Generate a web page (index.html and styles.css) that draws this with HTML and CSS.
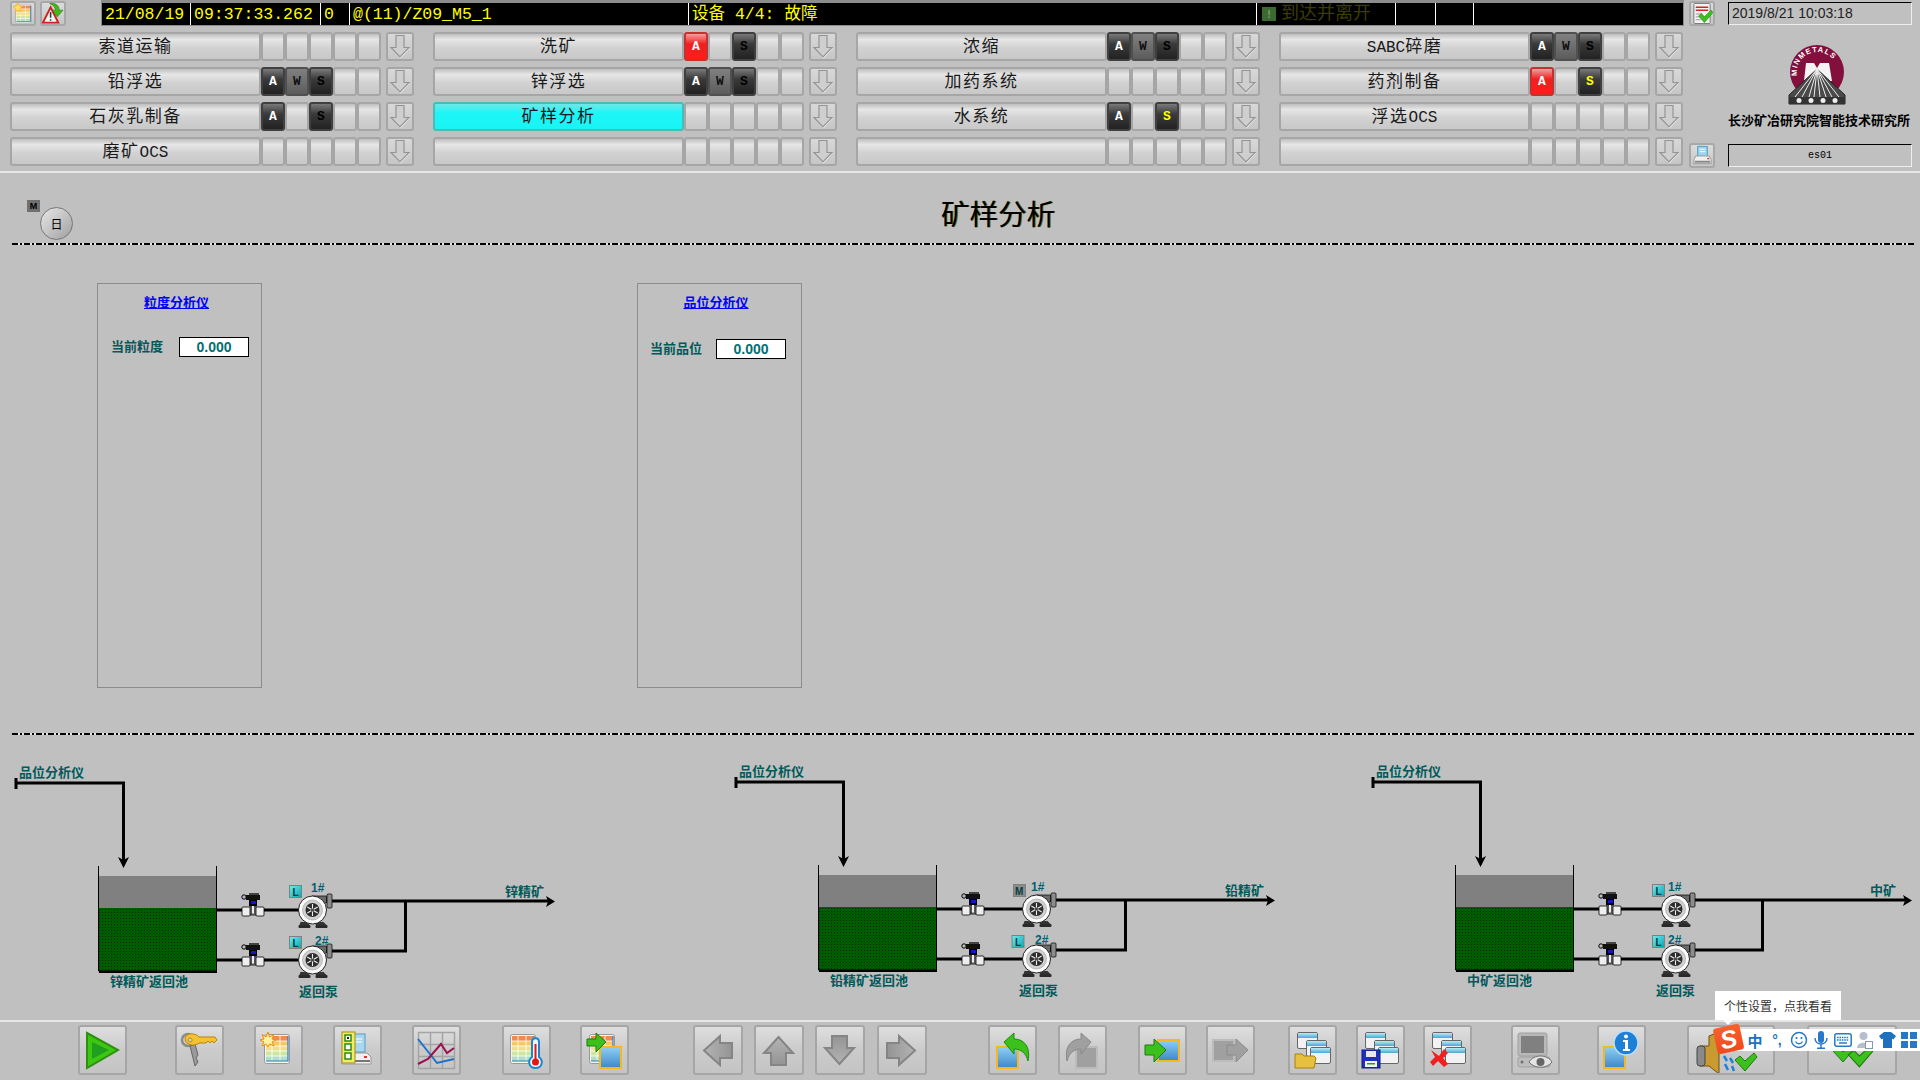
FILE: index.html
```html
<!DOCTYPE html>
<html lang="zh-CN">
<head>
    <meta charset="UTF-8">
    <title>矿样分析</title>
    <link rel="stylesheet" href="styles.css">
</head>
<body>
    <svg class="defs" width="0" height="0">
        <defs>
            <linearGradient id="grayArrow" x1="0" y1="0" x2="0" y2="1"><stop offset="0" stop-color="#b4b4b4"/><stop offset="1" stop-color="#949494"/></linearGradient>
            <linearGradient id="blueBox" x1="0" y1="0" x2="0" y2="1"><stop offset="0" stop-color="#8fd0f5"/><stop offset="1" stop-color="#3d86c8"/></linearGradient>
            <linearGradient id="cyanBadge" x1="0" y1="0" x2="1" y2="1"><stop offset="0" stop-color="#70f0f0"/><stop offset="1" stop-color="#0aa0b0"/></linearGradient>
            <linearGradient id="titleBar" x1="0" y1="0" x2="0" y2="1"><stop offset="0" stop-color="#b8ecf8"/><stop offset="1" stop-color="#4aa8d0"/></linearGradient>
            <pattern id="slurry" width="3" height="3" patternUnits="userSpaceOnUse"><rect width="3" height="3" fill="#005c00"/><rect width="1" height="1" fill="#002a00"/></pattern>

            <symbol id="sheet" viewBox="0 0 26 30">
                <rect x="0.5" y="0.5" width="25" height="29" rx="2" fill="#f4f4f4" stroke="#999"/>
                <rect x="2" y="2" width="22" height="5" fill="#f08a50"/>
                <rect x="2" y="7" width="22" height="5" fill="#f6c860"/>
                <rect x="2" y="12" width="22" height="5" fill="#eee08a"/>
                <rect x="2" y="17" width="22" height="5" fill="#cfe6a0"/>
                <rect x="2" y="22" width="22" height="5" fill="#b0e0c0"/>
                <path d="M8 2V27M16 2V27M2 7H24M2 12H24M2 17H24M2 22H24" stroke="#fff" stroke-width="0.8"/>
                <path d="M24 2V27H2" fill="none" stroke="#2a78c8" stroke-width="1.2"/>
            </symbol>
            <symbol id="win" viewBox="0 0 21 17">
                <rect x="0.5" y="0.5" width="20" height="16" rx="1.5" fill="#f2f2f2" stroke="#666"/>
                <rect x="1" y="1" width="19" height="5" fill="url(#titleBar)"/>
            </symbol>
            <symbol id="frame" viewBox="0 0 23 23">
                <rect x="1" y="1" width="21" height="21" fill="url(#blueBox)" stroke="#f4b820" stroke-width="2"/>
            </symbol>
            <symbol id="frameOff" viewBox="0 0 23 23">
                <rect x="1" y="1" width="21" height="21" fill="#a0a0a0" stroke="#bcbcbc" stroke-width="2"/>
            </symbol>
            <symbol id="arrowUp" viewBox="0 0 49 49">
                <path d="M24.5 11 39 27H32V39H17V27H10Z" fill="url(#grayArrow)" stroke="#858585" stroke-width="2"/>
            </symbol>
            <symbol id="tick" viewBox="0 0 24 20">
                <path d="M1 8 6 4 11 9 20 1 23 5 11 19Z" fill="#3cc01c" stroke="#1f7a10"/>
            </symbol>
            <symbol id="downHint" viewBox="0 0 24 25">
                <path d="M9 2.500H16V14H22L12.500 24.500 3 14H9Z" fill="#f0f0f0"/>
                <path d="M8 1.500H16V13.500H21L12 23 3 13.500H8Z" fill="#cfcfcf" stroke="#949494" stroke-width="1.200"/>
            </symbol>
            <symbol id="pump" viewBox="-16 -17 37 46">
                <path d="M0 -14H14V-7H8Z" fill="#6a6a6a" stroke="#111" stroke-width="0.8"/>
                <rect x="14.5" y="-16" width="5" height="14" rx="1" fill="#8c8c8c" stroke="#111" stroke-width="0.8"/>
                <path d="M-12 12 -13 15H-3L-5 12ZM4 12 3 15H14L11 12Z" fill="#333"/>
                <rect x="-14" y="15" width="12" height="3" rx="1" fill="#2a2a2a"/>
                <rect x="3" y="15" width="12" height="3" rx="1" fill="#2a2a2a"/>
                <circle r="14" fill="#fbfbfb" stroke="#222"/>
                <circle r="10" fill="#d0d0d0" stroke="#999" stroke-width="0.6"/>
                <circle r="7" fill="#2c2c2c"/>
                <path d="M0 -6V6M-5.2 -3 5.2 3M-5.2 3 5.2 -3" stroke="#eee" stroke-width="1.1"/>
                <circle r="1.6" fill="#444"/>
            </symbol>
            <symbol id="valve" viewBox="-12 -19 24 29">
                <path d="M-3 -4H3V5H-3Z" fill="#bbb" stroke="#000" stroke-width="0.8"/>
                <rect x="-11" y="-3" width="8" height="9" rx="1" fill="#eee" stroke="#000" stroke-width="0.8"/>
                <rect x="3" y="-3" width="8" height="9" rx="1" fill="#eee" stroke="#000" stroke-width="0.8"/>
                <rect x="-1.5" y="-5" width="3" height="9" fill="#eee" stroke="#000" stroke-width="0.6"/>
                <rect x="-4" y="-10" width="8" height="6" fill="#000"/>
                <rect x="-2" y="-9" width="5" height="3" fill="#1414d0"/>
                <rect x="-7" y="-15" width="14" height="5" fill="#111"/>
                <rect x="-4" y="-17" width="10" height="2" fill="#444"/>
                <circle cx="-9" cy="-13" r="2.2" fill="#bbb" stroke="#000"/>
            </symbol>
        </defs>
    </svg>

    <header class="header">
        <div class="nav-area">
            <div class="status-row">
                <button class="mini-btn">
                    <svg width="23" height="23" viewBox="0 0 23 23"><use href="#sheet" x="3" y="2" width="18" height="20"/><path d="M6 0 7.500 3.500 11 4 8.500 6.500 9 10 6 8 3 10 3.500 6.500 1 4 4.500 3.500Z" fill="#ffe15a" stroke="#f09a20" stroke-width="0.6"/></svg>
                </button>
                <button class="mini-btn">
                    <svg width="23" height="23" viewBox="0 0 23 23"><path d="M9 5 17 21H1Z" fill="#f4f4f4" stroke="#d02020" stroke-width="2"/><path d="M9 10V16M9 17.500V19" stroke="#333" stroke-width="1.6"/><path d="M8 1C14 0 18 3 18 8H22L16 15 11 8H14C14 5 12 3 8 1Z" fill="#44b818" stroke="#2a7a10" stroke-width="0.6"/></svg>
                </button>
                <div class="alarm-bar">
                    <span class="alarm-cell date">21/08/19</span>
                    <span class="alarm-cell time">09:37:33.262</span>
                    <span class="alarm-cell code">0</span>
                    <span class="alarm-cell tag">@(11)/Z09_M5_1</span>
                    <span class="alarm-cell desc">设备 4/4: 故障</span>
                    <span class="alarm-cell state"><i class="state-flag">!</i>到达并离开</span>
                    <span class="alarm-cell blank-a"></span>
                    <span class="alarm-cell blank-b"></span>
                    <span class="alarm-cell blank-c"></span>
                </div>
            </div>
            <nav class="nav-grid">
                <div class="nav-item"><button class="nav-btn">索道运输</button><span class="cell"></span><span class="cell"></span><span class="cell"></span><span class="cell"></span><span class="cell"></span><button class="hint"><svg width="24" height="25"><use href="#downHint" width="24" height="25"/></svg></button></div>
                <div class="nav-item"><button class="nav-btn">洗矿</button><span class="cell red">A</span><span class="cell"></span><span class="cell dark">S</span><span class="cell"></span><span class="cell"></span><button class="hint"><svg width="24" height="25"><use href="#downHint" width="24" height="25"/></svg></button></div>
                <div class="nav-item"><button class="nav-btn">浓缩</button><span class="cell dark lit">A</span><span class="cell mid">W</span><span class="cell dark">S</span><span class="cell"></span><span class="cell"></span><button class="hint"><svg width="24" height="25"><use href="#downHint" width="24" height="25"/></svg></button></div>
                <div class="nav-item"><button class="nav-btn"><span class="latin">SABC</span>碎磨</button><span class="cell dark lit">A</span><span class="cell mid">W</span><span class="cell dark">S</span><span class="cell"></span><span class="cell"></span><button class="hint"><svg width="24" height="25"><use href="#downHint" width="24" height="25"/></svg></button></div>

                <div class="nav-item"><button class="nav-btn">铅浮选</button><span class="cell dark lit">A</span><span class="cell mid">W</span><span class="cell dark">S</span><span class="cell"></span><span class="cell"></span><button class="hint"><svg width="24" height="25"><use href="#downHint" width="24" height="25"/></svg></button></div>
                <div class="nav-item"><button class="nav-btn">锌浮选</button><span class="cell dark lit">A</span><span class="cell mid">W</span><span class="cell dark">S</span><span class="cell"></span><span class="cell"></span><button class="hint"><svg width="24" height="25"><use href="#downHint" width="24" height="25"/></svg></button></div>
                <div class="nav-item"><button class="nav-btn">加药系统</button><span class="cell"></span><span class="cell"></span><span class="cell"></span><span class="cell"></span><span class="cell"></span><button class="hint"><svg width="24" height="25"><use href="#downHint" width="24" height="25"/></svg></button></div>
                <div class="nav-item"><button class="nav-btn">药剂制备</button><span class="cell red">A</span><span class="cell"></span><span class="cell dark warn">S</span><span class="cell"></span><span class="cell"></span><button class="hint"><svg width="24" height="25"><use href="#downHint" width="24" height="25"/></svg></button></div>

                <div class="nav-item"><button class="nav-btn">石灰乳制备</button><span class="cell dark lit">A</span><span class="cell"></span><span class="cell dark">S</span><span class="cell"></span><span class="cell"></span><button class="hint"><svg width="24" height="25"><use href="#downHint" width="24" height="25"/></svg></button></div>
                <div class="nav-item"><button class="nav-btn active">矿样分析</button><span class="cell"></span><span class="cell"></span><span class="cell"></span><span class="cell"></span><span class="cell"></span><button class="hint"><svg width="24" height="25"><use href="#downHint" width="24" height="25"/></svg></button></div>
                <div class="nav-item"><button class="nav-btn">水系统</button><span class="cell dark lit">A</span><span class="cell"></span><span class="cell dark warn">S</span><span class="cell"></span><span class="cell"></span><button class="hint"><svg width="24" height="25"><use href="#downHint" width="24" height="25"/></svg></button></div>
                <div class="nav-item"><button class="nav-btn">浮选<span class="latin">OCS</span></button><span class="cell"></span><span class="cell"></span><span class="cell"></span><span class="cell"></span><span class="cell"></span><button class="hint"><svg width="24" height="25"><use href="#downHint" width="24" height="25"/></svg></button></div>

                <div class="nav-item"><button class="nav-btn">磨矿<span class="latin">OCS</span></button><span class="cell"></span><span class="cell"></span><span class="cell"></span><span class="cell"></span><span class="cell"></span><button class="hint"><svg width="24" height="25"><use href="#downHint" width="24" height="25"/></svg></button></div>
                <div class="nav-item"><button class="nav-btn"></button><span class="cell"></span><span class="cell"></span><span class="cell"></span><span class="cell"></span><span class="cell"></span><button class="hint"><svg width="24" height="25"><use href="#downHint" width="24" height="25"/></svg></button></div>
                <div class="nav-item"><button class="nav-btn"></button><span class="cell"></span><span class="cell"></span><span class="cell"></span><span class="cell"></span><span class="cell"></span><button class="hint"><svg width="24" height="25"><use href="#downHint" width="24" height="25"/></svg></button></div>
                <div class="nav-item"><button class="nav-btn"></button><span class="cell"></span><span class="cell"></span><span class="cell"></span><span class="cell"></span><span class="cell"></span><button class="hint"><svg width="24" height="25"><use href="#downHint" width="24" height="25"/></svg></button></div>
            </nav>
        </div>
        <div class="side-icons">
            <button class="mini-btn">
                <svg width="23" height="23" viewBox="0 0 23 23"><rect x="3" y="1" width="17" height="21" rx="1" fill="#f2f2f2" stroke="#777"/><path d="M5 5H18M5 8H18" stroke="#d82020" stroke-width="1.6"/><path d="M5 12H11M5 15H10M5 18H10" stroke="#999"/><path d="M8 14 11 11.500 14 15 21 8 23 10.500 14 21Z" fill="#3cc01c" stroke="#1f7a10" stroke-width="0.6"/></svg>
            </button>
            <button class="mini-btn">
                <svg width="23" height="23" viewBox="0 0 23 23"><rect x="7" y="2" width="10" height="11" fill="#9ad4f0" stroke="#5a9ac0"/><path d="M9 5H15M9 7.500H15" stroke="#fff"/><path d="M5 12H19L21 16V20H3V16Z" fill="#f0f0f0" stroke="#999"/><rect x="4" y="17" width="16" height="2" fill="#888"/><rect x="17" y="14" width="2" height="1.500" fill="#e03030"/></svg>
            </button>
        </div>
        <aside class="side">
            <div class="clock">2019/8/21 10:03:18</div>
            <svg class="logo" width="60" height="62" viewBox="0 0 60 62">
                <defs><path id="logoArc" d="M10.500 35A20.500 20.500 0 1 1 50 35"/></defs>
                <circle cx="30" cy="29" r="27" fill="#820f3c"/>
                <text class="logo-text"><textPath href="#logoArc" startOffset="3%">MINMETALS</textPath></text>
                <path d="M17 38 19 20H27L30 25 33 20H42L45 38H37L30 29 23 38Z" fill="#f4f4f4"/>
                <path d="M30 26 58 52V61H2V52Z" fill="#4a4a4a" stroke="#222"/>
                <path d="M30 26 8 54M30 26 15 54M30 26 22 54M30 26 27 54M30 26 33 54M30 26 39 54M30 26 45 54M30 26 52 54" stroke="#eee"/>
                <rect x="2" y="54" width="56" height="7" fill="#333"/>
                <circle cx="12" cy="57.500" r="2.500" fill="#eee"/><circle cx="24" cy="57.500" r="2.500" fill="#eee"/><circle cx="36" cy="57.500" r="2.500" fill="#eee"/><circle cx="48" cy="57.500" r="2.500" fill="#eee"/>
            </svg>
            <div class="org">长沙矿冶研究院智能技术研究所</div>
            <div class="station">es01</div>
        </aside>
    </header>

    <main>
        <div class="title-row">
            <span class="mode-tag">M</span>
            <span class="mode-knob">日</span>
            <h1 class="page-title">矿样分析</h1>
        </div>
        <div class="dash-line"></div>

        <section class="panels">
            <div class="panel">
                <a class="panel-title" href="#">粒度分析仪</a>
                <div class="reading">
                    <span class="reading-label">当前粒度</span>
                    <span class="reading-value">0.000</span>
                </div>
            </div>
            <div class="panel panel-grade">
                <a class="panel-title" href="#">品位分析仪</a>
                <div class="reading">
                    <span class="reading-label">当前品位</span>
                    <span class="reading-value">0.000</span>
                </div>
            </div>
        </section>

        <div class="dash-line dash-lower"></div>

        <svg class="plant" width="1920" height="285" viewBox="0 735 1920 285">
            <!-- 锌精矿 -->
            <g>
                <text class="pipe-label" x="19" y="777">品位分析仪</text>
                <path class="pipe" d="M16 783H123.500V862"/><path class="cap" d="M16 778V789"/><path class="head" d="M118 857 123.500 860 129 857 123.500 868Z"/>
                <rect x="99" y="876" width="117" height="32" fill="#808080"/><rect x="99" y="908" width="117" height="63" fill="url(#slurry)"/>
                <path class="wall" d="M98.500 866V971H216.500V866"/><path class="floor" d="M99 972H217"/>
                <path class="pipe" d="M217 910H305M217 960H305M325 901H548M325 951H405.500V901"/><path class="head" d="M546 896 555 901.500 546 907 548 901.500Z"/>
                <use href="#valve" x="241" y="891" width="24" height="29"/><use href="#valve" x="241" y="941" width="24" height="29"/>
                <use href="#pump" x="296.500" y="893" width="37" height="46"/><use href="#pump" x="296.500" y="943" width="37" height="46"/>
                <rect class="badge" x="289.500" y="885.500" width="12" height="12"/><text class="badge-text" x="292.500" y="896">L</text>
                <rect class="badge" x="289.500" y="936.500" width="12" height="12"/><text class="badge-text" x="292.500" y="947">L</text>
                <text class="pump-no" x="311" y="892">1#</text><text class="pump-no" x="315" y="945">2#</text>
                <text class="pipe-label" x="505" y="896">锌精矿</text>
                <text class="pipe-label" x="110" y="986">锌精矿返回池</text>
                <text class="pipe-label" x="299" y="996">返回泵</text>
            </g>
            <!-- 铅精矿 -->
            <g transform="translate(720 -1)">
                <text class="pipe-label" x="19" y="777">品位分析仪</text>
                <path class="pipe" d="M16 783H123.500V862"/><path class="cap" d="M16 778V789"/><path class="head" d="M118 857 123.500 860 129 857 123.500 868Z"/>
                <rect x="99" y="876" width="117" height="32" fill="#808080"/><rect x="99" y="908" width="117" height="63" fill="url(#slurry)"/>
                <path class="wall" d="M98.500 866V971H216.500V866"/><path class="floor" d="M99 972H217"/>
                <path class="pipe" d="M217 910H305M217 960H305M325 901H548M325 951H405.500V901"/><path class="head" d="M546 896 555 901.500 546 907 548 901.500Z"/>
                <use href="#valve" x="241" y="891" width="24" height="29"/><use href="#valve" x="241" y="941" width="24" height="29"/>
                <g transform="translate(4 0)">
                    <use href="#pump" x="296.500" y="893" width="37" height="46"/><use href="#pump" x="296.500" y="943" width="37" height="46"/>
                    <rect class="badge badge-off" x="289.500" y="885.500" width="12" height="12"/><text class="badge-text" x="291" y="896">M</text>
                    <rect class="badge" x="288" y="936.500" width="12" height="12"/><text class="badge-text" x="291" y="947">L</text>
                </g>
                <text class="pump-no" x="311" y="892">1#</text><text class="pump-no" x="315" y="945">2#</text>
                <text class="pipe-label" x="505" y="896">铅精矿</text>
                <text class="pipe-label" x="110" y="986">铅精矿返回池</text>
                <text class="pipe-label" x="299" y="996">返回泵</text>
            </g>
            <!-- 中矿 -->
            <g transform="translate(1357 -1)">
                <text class="pipe-label" x="19" y="777">品位分析仪</text>
                <path class="pipe" d="M16 783H123.500V862"/><path class="cap" d="M16 778V789"/><path class="head" d="M118 857 123.500 860 129 857 123.500 868Z"/>
                <rect x="99" y="876" width="117" height="32" fill="#808080"/><rect x="99" y="908" width="117" height="63" fill="url(#slurry)"/>
                <path class="wall" d="M98.500 866V971H216.500V866"/><path class="floor" d="M99 972H217"/>
                <path class="pipe" d="M217 910H305M217 960H305M325 901H548M325 951H405.500V901"/><path class="head" d="M546 896 555 901.500 546 907 548 901.500Z"/>
                <use href="#valve" x="241" y="891" width="24" height="29"/><use href="#valve" x="241" y="941" width="24" height="29"/>
                <g transform="translate(6 0)">
                    <use href="#pump" x="296.500" y="893" width="37" height="46"/><use href="#pump" x="296.500" y="943" width="37" height="46"/>
                    <rect class="badge" x="289.500" y="885.500" width="12" height="12"/><text class="badge-text" x="292.500" y="896">L</text>
                    <rect class="badge" x="289.500" y="936.500" width="12" height="12"/><text class="badge-text" x="292.500" y="947">L</text>
                </g>
                <text class="pump-no" x="311" y="892">1#</text><text class="pump-no" x="311" y="945">2#</text>
                <text class="pipe-label" x="513" y="896">中矿</text>
                <text class="pipe-label" x="110" y="986">中矿返回池</text>
                <text class="pipe-label" x="299" y="996">返回泵</text>
            </g>
        </svg>
    </main>

    <footer class="toolbar">
        <button class="tool gap-78"><svg width="49" height="49"><path d="M9 7 40 24 9 42Z" fill="#3cc810" stroke="#2f8f10" stroke-width="2"/><path d="M14 16 31 24 14 33Z" fill="#1f9f20"/></svg></button>
        <button class="tool gap-48"><svg width="49" height="49"><circle cx="13" cy="14" r="6" fill="none" stroke="#8c8c8c" stroke-width="2.500"/><path d="M15 20 20 40 23 36 21 32 23 29 20 18Z" fill="#9a9a9a" stroke="#666"/><path d="M10 13C10 7 20 6 24 11H40L42 14 39 17 37 15 35 17 33 15 31 17H24C20 21 10 19 10 13ZM15 12A2 2 0 1 0 15.100 12Z" fill="#f4c230" stroke="#b88410" fill-rule="evenodd"/></svg></button>
        <button class="tool gap-30"><svg width="49" height="49"><use href="#sheet" x="10" y="8" width="26" height="30"/><path d="M14 6 15.500 11 20 8.500 18 13 22 14 18 16 20 20 15.500 18 14 21 12 18 8 20 10 16 6 14 10 13 8 8.500 12 11Z" fill="#fff2a0" stroke="#f08a10"/></svg></button>
        <button class="tool gap-30"><svg width="49" height="49"><rect x="17" y="8" width="15" height="18" fill="#a8d8f0" stroke="#5a9ac0"/><path d="M20 13H29M20 16H29" stroke="#fff"/><path d="M12 27H34L38 31V38H9V31Z" fill="#efefef" stroke="#999"/><rect x="10" y="34" width="27" height="2" fill="#777"/><rect x="31" y="30" width="3" height="2" fill="#e03030"/><rect x="9" y="6" width="13" height="31" fill="#f2ec60" stroke="#a08a20"/><rect x="12" y="9" width="6" height="6" fill="#fff" stroke="#2a8a10" stroke-width="1.500"/><rect x="14" y="11" width="2" height="2" fill="#222"/><rect x="12" y="18" width="6" height="6" fill="#fff" stroke="#2a8a10" stroke-width="1.500"/><rect x="12" y="27" width="6" height="6" fill="#fff" stroke="#2a8a10" stroke-width="1.500"/></svg></button>
        <button class="tool gap-30"><svg width="49" height="49"><path d="M6.500 6.500H42.500V42.500H6.500ZM18.500 6.500V42.500M30.500 6.500V42.500M6.500 18.500H42.500M6.500 30.500H42.500" fill="none" stroke="#a4a4a4" stroke-width="1.500"/><path d="M6 13 25 37 42 33" fill="none" stroke="#1f70c8" stroke-width="2"/><path d="M6 38 16 33 29 18 35 27 42 22" fill="none" stroke="#9a1050" stroke-width="2"/></svg></button>
        <button class="tool gap-41"><svg width="49" height="49"><use href="#sheet" x="8" y="8" width="26" height="30"/><path d="M30 16C30 11 37 11 37 16V31C42 35 40 42 33.500 42 27 42 25 35 30 31Z" fill="#f4f4f4" stroke="#1a88d0" stroke-width="2"/><path d="M33.500 18V35" stroke="#e01818" stroke-width="2"/><circle cx="33.500" cy="36" r="3.500" fill="#e01818"/></svg></button>
        <button class="tool gap-29"><svg width="49" height="49"><use href="#sheet" x="9" y="8" width="26" height="30"/><use href="#frame" x="19" y="20" width="23" height="23"/><path d="M7 13H16V7L26 16 16 26V20H7Z" fill="#3cc01c" stroke="#1f7a10"/></svg></button>
        <button class="tool tool-arrow gap-64"><svg width="49" height="49"><use href="#arrowUp" width="49" height="49" transform="rotate(-90 24.500 24.500)"/></svg></button>
        <button class="tool tool-arrow gap-11"><svg width="49" height="49"><use href="#arrowUp" width="49" height="49"/></svg></button>
        <button class="tool tool-arrow gap-11"><svg width="49" height="49"><use href="#arrowUp" width="49" height="49" transform="rotate(180 24.500 24.500)"/></svg></button>
        <button class="tool tool-arrow gap-12"><svg width="49" height="49"><use href="#arrowUp" width="49" height="49" transform="rotate(90 24.500 24.500)"/></svg></button>
        <button class="tool gap-61"><svg width="49" height="49"><use href="#frame" x="8" y="20" width="23" height="23"/><path d="M16 16 26 7V13C36 13 43 21 40 35 38 27 33 23 26 23V28Z" fill="#3cc01c" stroke="#1f8a10"/></svg></button>
        <button class="tool gap-21"><svg width="49" height="49"><use href="#frameOff" x="17" y="20" width="23" height="23"/><path d="M33 16 23 7V13C13 13 6 21 9 35 11 27 16 23 23 23V28Z" fill="#a0a0a0" stroke="#8a8a8a"/></svg></button>
        <button class="tool gap-31"><svg width="49" height="49"><use href="#frame" x="19" y="13" width="23" height="23"/><path d="M7 19H16V13L28 24 16 36V29H7Z" fill="#3cc01c" stroke="#1f7a10"/></svg></button>
        <button class="tool gap-19"><svg width="49" height="49"><use href="#frameOff" x="6" y="13" width="23" height="23"/><path d="M21 19H30V13L42 24 30 36V29H21Z" fill="#a0a0a0" stroke="#8a8a8a"/></svg></button>
        <button class="tool gap-33"><svg width="49" height="49"><use href="#win" x="9" y="6" width="21" height="17"/><use href="#win" x="18" y="14" width="21" height="17"/><use href="#win" x="22" y="21" width="21" height="17"/><path d="M7 42V28H14L16 30H26L28 32 26 42Z" fill="#e8c040" stroke="#a88010"/></svg></button>
        <button class="tool gap-19"><svg width="49" height="49"><use href="#win" x="9" y="6" width="21" height="17"/><use href="#win" x="18" y="14" width="21" height="17"/><use href="#win" x="22" y="21" width="21" height="17"/><rect x="6" y="24" width="18" height="18" fill="#2030b8" stroke="#101a80"/><rect x="10" y="25" width="10" height="6" fill="#e8e8e8"/><rect x="9" y="35" width="12" height="6" fill="#f2f2f2"/><rect x="11" y="37" width="8" height="1.500" fill="#20a020"/></svg></button>
        <button class="tool gap-18"><svg width="49" height="49"><use href="#win" x="9" y="6" width="21" height="17"/><use href="#win" x="18" y="14" width="21" height="17"/><use href="#win" x="22" y="21" width="21" height="17"/><path d="M8 24 16 30 21 23 25 27 20 32 25 38 21 41 15 35 10 40 7 36 12 31Z" fill="#f02020"/></svg></button>
        <button class="tool gap-39"><svg width="49" height="49"><rect x="7" y="7" width="29" height="23" rx="2" fill="#b8b8b8" stroke="#a0a0a0"/><rect x="10" y="10" width="23" height="17" fill="#808080"/><rect x="7" y="31" width="32" height="10" rx="2" fill="#bdbdbd" stroke="#a0a0a0"/><circle cx="11" cy="36" r="1.500" fill="#707070"/><path d="M18 36C23 28 36 28 41 36 36 43 23 43 18 36Z" fill="#e4e4e4" stroke="#707070"/><circle cx="29.500" cy="36" r="4" fill="#666"/></svg></button>
        <button class="tool gap-37"><svg width="49" height="49"><use href="#frame" x="6" y="20" width="23" height="23"/><circle cx="29" cy="17" r="12" fill="#1f80d8" stroke="#bce0f8" stroke-width="1.500"/><circle cx="29" cy="10.500" r="2" fill="#fff"/><path d="M26 14H31V23H33V25H26V23H28V16H26Z" fill="#fff"/></svg></button>
        <button class="tool tool-wide gap-41"><svg width="88" height="49"><path d="M22 10 32 6V48L22 40H13V20H22Z" fill="#c89a30" stroke="#705010"/><rect x="10" y="20" width="8" height="20" rx="3" fill="#8a8a8a" stroke="#444"/><path d="M37 30 40 35M43 32 46 37M38 38 41 44M45 40 47 45" stroke="#1f80d8" stroke-width="2.500"/><use href="#tick" x="47" y="26" width="24" height="20"/></svg></button>
        <button class="tool tool-wide tool-last gap-32"><svg width="90" height="49"><use href="#tick" x="25" y="17" width="24" height="20"/><use href="#tick" x="40" y="20" width="27" height="22"/></svg></button>
    </footer>

    <div class="tip">个性设置，点我看看</div>
    <div class="ime">
        <span class="ime-logo">S</span>
        <span class="ime-slot ime-zh">中</span>
        <span class="ime-slot ime-punct">°,</span>
        <span class="ime-slot"><svg width="18" height="18" viewBox="0 0 18 18"><circle cx="9" cy="9" r="7.500" fill="none" stroke="#2878c8" stroke-width="1.500"/><path d="M5.500 10.500C7 13.500 11 13.500 12.500 10.500" fill="none" stroke="#2878c8" stroke-width="1.300"/><circle cx="6.500" cy="7" r="1.100" fill="#2878c8"/><circle cx="11.500" cy="7" r="1.100" fill="#2878c8"/></svg></span>
        <span class="ime-slot"><svg width="16" height="18" viewBox="0 0 16 18"><rect x="5" y="0" width="6" height="12" rx="3" fill="#2878c8"/><path d="M2 7C2 15 14 15 14 7M8 13V17M4 17.300H12" fill="none" stroke="#2878c8" stroke-width="1.500"/></svg></span>
        <span class="ime-slot"><svg width="18" height="14" viewBox="0 0 18 14"><rect x="0.800" y="0.800" width="16.400" height="12.400" rx="2" fill="none" stroke="#2878c8" stroke-width="1.500"/><path d="M3 4.500H15M3 7H15" stroke="#2878c8" stroke-width="1.500" stroke-dasharray="1.600 0.800"/><path d="M5 10H13" stroke="#2878c8" stroke-width="1.500"/></svg></span>
        <span class="ime-slot"><svg width="16" height="18" viewBox="0 0 16 18"><circle cx="6.500" cy="5" r="4" fill="#b4c0cc"/><path d="M0 17C0 10 13 10 13 17Z" fill="#b4c0cc"/><rect x="8.500" y="10.500" width="7" height="7" fill="#fff" stroke="#8a98a8"/></svg></span>
        <span class="ime-slot"><svg width="17" height="16" viewBox="0 0 17 16"><path d="M5 0H12L17 4 14.500 7.500 13 6.500V16H4V6.500L2.500 7.500 0 4Z" fill="#2070c0"/></svg></span>
        <span class="ime-slot"><svg width="16" height="16" viewBox="0 0 16 16"><path d="M0 0H7V7H0ZM9 0H16V7H9ZM0 9H7V16H0ZM9 9H16V16H9Z" fill="#2878c8"/></svg></span>
    </div>
</body>
</html>
```

FILE: styles.css
```css
* {
    box-sizing: border-box;
}
html, body {
    margin: 0;
    height: 1080px;
    overflow: hidden;
}
body {
    background-color: #c0c0c0;
    font-family: "Noto Sans CJK SC", "Liberation Sans", sans-serif;
    color: #000;
    position: relative;
}
button {
    font-family: inherit;
    padding: 0;
    margin: 0;
    cursor: pointer;
}
.defs {
    position: absolute;
}

/* top header */
.header {
    display: flex;
    height: 173px;
    border-bottom: 2px solid #e6e6e6;
}
.nav-area {
    width: 1684px;
    padding-left: 10px;
}
.status-row {
    display: flex;
    height: 32px;
    padding-top: 1px;
}
.mini-btn {
    width: 26px;
    height: 25px;
    margin-right: 4px;
    display: flex;
    align-items: center;
    justify-content: center;
    background: linear-gradient(#dcdcdc, #c6c6c6);
    border: 2px solid #a8a8a8;
    border-radius: 3px;
}
.alarm-bar {
    display: flex;
    width: 1583px;
    height: 26px;
    margin-left: 31px;
    margin-top: -1px;
    background-color: #000;
    border: solid #8c8c8c;
    border-width: 3px 1px 1px 1px;
    color: #ff0;
    font: 16.500px/23px "Liberation Mono", "Noto Sans CJK SC", monospace;
}
.alarm-cell {
    display: block;
    padding-left: 3px;
    border-right: 1px solid #fff;
    white-space: nowrap;
    overflow: hidden;
}
.date { width: 89px; }
.time { width: 130px; }
.code { width: 29px; }
.tag { width: 339px; }
.desc { width: 568px; }
.state {
    width: 139px;
    padding-left: 5px;
    color: #3c3c00;
    display: flex;
    align-items: center;
    font-size: 18px;
    overflow: visible;
}
.state-flag {
    width: 14px;
    height: 14px;
    margin-right: 5px;
    flex: none;
    background-color: #3a6a30;
    color: #7a9a70;
    font: bold 11px/14px "Liberation Sans", sans-serif;
    text-align: center;
}
.blank-a { width: 40px; }
.blank-b { width: 38px; }
.blank-c { flex: 1; border-right: none; }

.nav-grid {
    display: grid;
    grid-template-columns: repeat(4, 404px);
    column-gap: 19px;
    row-gap: 6px;
}
.nav-item {
    display: flex;
    height: 29px;
}
.nav-btn {
    width: 251px;
    height: 29px;
    padding-bottom: 3px;
    border: 2px solid #a6a6a6;
    border-radius: 3px;
    background: linear-gradient(#bfbfbf, #e6e6e6 22%, #d2d2d2 55%, #c8c8c8);
    color: #1a1a1a;
    font: 17px/22px "Noto Sans CJK SC", sans-serif;
    letter-spacing: 1.500px;
}
.latin {
    font-family: "Liberation Mono", monospace;
    font-size: 16px;
    letter-spacing: 0;
}
.nav-btn.active {
    background: linear-gradient(#6fe8e8, #1ef6f6 35%, #18f4f4);
    border-color: #4fb8b8;
}
.cell {
    width: 24px;
    height: 29px;
    border: 2px solid #a6a6a6;
    border-radius: 3px;
    background: linear-gradient(#bfbfbf, #e6e6e6 22%, #d2d2d2 55%, #c8c8c8);
    font: bold 13px/25px "Liberation Mono", monospace;
    text-align: center;
}
.cell.dark {
    background: linear-gradient(#7a7a7a, #3a3a3a 40%, #222);
    border-color: #404040;
    color: #000;
}
.cell.lit {
    color: #fff;
}
.cell.warn {
    color: #ff0;
}
.cell.mid {
    background: linear-gradient(#808080, #5c5c5c);
    border-color: #505050;
    color: #111;
}
.cell.red {
    background: linear-gradient(#f0a0a0, #f02020 40%, #ff1c1c);
    border-color: #c83030;
    color: #fff;
}
.hint {
    width: 28px;
    height: 29px;
    margin-left: 5px;
    border: 2px solid #a6a6a6;
    border-radius: 3px;
    background: linear-gradient(#d8d8d8, #c6c6c6);
    display: flex;
    align-items: center;
    justify-content: center;
}
.side-icons {
    width: 26px;
    margin-left: 5px;
    padding: 1px 0 3px;
    display: flex;
    flex-direction: column;
    justify-content: space-between;
}
.side {
    width: 184px;
    margin-left: 13px;
    display: flex;
    flex-direction: column;
}
.clock {
    height: 23px;
    margin-top: 2px;
    padding-left: 3px;
    border: 1px solid;
    border-color: #000 #eee #eee #000;
    color: #222;
    font: 14px/20px "Liberation Sans", sans-serif;
}
.logo {
    margin: 18px 0 0 59px;
    flex: none;
}
.logo-text {
    fill: #fff;
    font: bold 7.500px "Liberation Sans", sans-serif;
    letter-spacing: 1.100px;
}
.org {
    margin-top: 6px;
    height: 17px;
    font-size: 13px;
    line-height: 17px;
    font-weight: 700;
    white-space: nowrap;
}
.station {
    height: 23px;
    margin-top: 16px;
    border: 1px solid;
    border-color: #000 #eee #eee #000;
    font: 10px/21px "Liberation Mono", monospace;
    text-align: center;
}

/* page body */
.title-row {
    position: relative;
    height: 70px;
    padding-left: 76px;
    text-align: center;
}
.page-title {
    margin: 0;
    padding-top: 22px;
    font-size: 28.500px;
    line-height: 36px;
    font-weight: 400;
    color: #000;
    text-shadow: 1px 0 0 #5a5a00;
}
.mode-tag {
    position: absolute;
    left: 27px;
    top: 27px;
    width: 13px;
    height: 12px;
    background-color: #707070;
    color: #000;
    font: bold 9px/12px "Liberation Sans", sans-serif;
    text-align: center;
}
.mode-knob {
    position: absolute;
    left: 40px;
    top: 34px;
    width: 33px;
    height: 33px;
    border: 1px solid #777;
    border-radius: 50%;
    background: linear-gradient(135deg, #e8e8e8, #a0a0a0);
    font-size: 12px;
    line-height: 31px;
    text-align: center;
}
.dash-line {
    height: 2px;
    margin: 0 6px 0 12px;
    background: repeating-linear-gradient(90deg, #000 0 6px, #e4e4e4 6px 8px, #000 8px 10px, #e4e4e4 10px 12px);
}
.dash-lower {
    margin-top: 45px;
}
.panels {
    display: flex;
    gap: 375px;
    margin-top: 38px;
    padding-left: 97px;
}
.panel {
    width: 165px;
    height: 405px;
    border: 1px solid #8c8c8c;
    padding: 10px 6px 0 13px;
}
.panel-title {
    display: block;
    text-align: center;
    padding-right: 13px;
    color: #0000ff;
    font-size: 13px;
    line-height: 16px;
    font-weight: 700;
}
.reading {
    display: flex;
    align-items: center;
    margin-top: 27px;
}
.reading-label {
    width: 68px;
    padding-bottom: 3px;
    color: #005a5a;
    font-size: 13px;
    line-height: 17px;
    font-weight: 700;
}
.reading-value {
    width: 70px;
    height: 20px;
    background-color: #fff;
    border: 1px solid #000;
    color: #007070;
    font: bold 14px/18px "Liberation Sans", sans-serif;
    text-align: center;
}
.panel-grade {
    padding-left: 12px;
}
.panel-grade .reading {
    margin-top: 29px;
}
.panel-grade .reading-label {
    width: 66px;
}
.plant {
    display: block;
}
.pipe {
    fill: none;
    stroke: #000;
    stroke-width: 3;
}
.cap {
    fill: none;
    stroke: #000;
    stroke-width: 3;
}
.head {
    fill: #000;
}
.wall {
    fill: none;
    stroke: #000;
    stroke-width: 1;
}
.floor {
    stroke: #000;
    stroke-width: 2;
}
.pipe-label {
    fill: #005a5a;
    font-size: 13px;
    font-weight: 700;
}
.pump-no {
    fill: #006070;
    font: bold 12px "Liberation Sans", sans-serif;
}
.badge {
    fill: url(#cyanBadge);
    stroke: #808080;
}
.badge-off {
    fill: #8c8c8c;
}
.badge-text {
    fill: #063c3c;
    font: bold 10px "Liberation Sans", sans-serif;
}

/* bottom toolbar */
.toolbar {
    display: flex;
    height: 60px;
    padding-top: 3px;
    border-top: 2px solid #e6e6e6;
}
.tool {
    width: 49px;
    height: 50px;
    flex: none;
    border: 2px solid #a6a6a6;
    border-radius: 3px;
    background: linear-gradient(#dedede, #cbcbcb 50%, #c4c4c4);
    overflow: hidden;
}
.tool svg {
    display: block;
    margin: -2px;
}
.tool-arrow {
    width: 50px;
}
.tool-wide {
    width: 88px;
}
.tool-last {
    width: 90px;
}
.gap-11 { margin-left: 11px; }
.gap-12 { margin-left: 12px; }
.gap-18 { margin-left: 18px; }
.gap-19 { margin-left: 19px; }
.gap-21 { margin-left: 21px; }
.gap-29 { margin-left: 29px; }
.gap-30 { margin-left: 30px; }
.gap-31 { margin-left: 31px; }
.gap-32 { margin-left: 32px; }
.gap-33 { margin-left: 33px; }
.gap-37 { margin-left: 37px; }
.gap-39 { margin-left: 39px; }
.gap-41 { margin-left: 41px; }
.gap-48 { margin-left: 48px; }
.gap-61 { margin-left: 61px; }
.gap-64 { margin-left: 64px; }
.gap-78 { margin-left: 78px; }

/* input method overlay */
.tip {
    position: absolute;
    left: 1715px;
    top: 991px;
    width: 126px;
    height: 29px;
    background-color: #fff;
    color: #333;
    font-size: 12px;
    line-height: 29px;
    text-align: center;
    white-space: nowrap;
}
.tip::after {
    content: "";
    position: absolute;
    left: 8px;
    top: 29px;
    border: 5px solid transparent;
    border-top-color: #fff;
    border-bottom: none;
}
.ime {
    position: absolute;
    left: 1730px;
    top: 1029px;
    width: 190px;
    height: 22px;
    padding-left: 14px;
    display: flex;
    align-items: center;
    background-color: #fff;
}
.ime-logo {
    position: absolute;
    left: -15px;
    top: -3px;
    width: 27px;
    height: 26px;
    border-radius: 3px;
    background: linear-gradient(#f8602c, #ee4a20);
    color: #fff;
    font: italic bold 25px/26px "Liberation Sans", sans-serif;
    text-align: center;
    transform: rotate(-12deg);
}
.ime-slot {
    width: 22px;
    height: 22px;
    flex: none;
    display: flex;
    align-items: center;
    justify-content: center;
    color: #2070c0;
}
.ime-zh {
    font-size: 15px;
    font-weight: 700;
}
.ime-punct {
    font: bold 14px/22px "Liberation Sans", sans-serif;
}
```
